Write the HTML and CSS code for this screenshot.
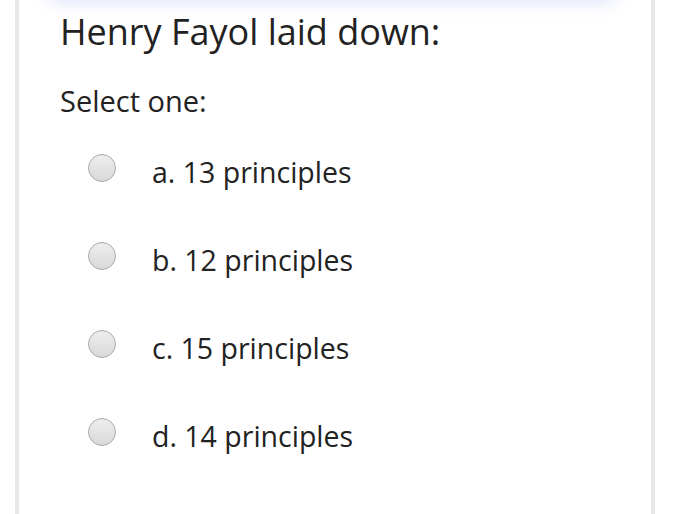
FILE: index.html
```html
<!DOCTYPE html>
<html>
<head>
<meta charset="utf-8">
<link rel="stylesheet" href="styles.css">
</head>
<body>
<div class="page">
  <div class="topcard"></div>
  <div class="content">
    <h1 class="question">Henry Fayol laid down:</h1>
    <p class="prompt">Select one:</p>
    <div class="answers">
      <label class="option"><span class="radio"></span><span class="label">a. 13 principles</span></label>
      <label class="option"><span class="radio"></span><span class="label">b. 12 principles</span></label>
      <label class="option"><span class="radio"></span><span class="label">c. 15 principles</span></label>
      <label class="option"><span class="radio"></span><span class="label">d. 14 principles</span></label>
    </div>
  </div>
</div>
</body>
</html>
```
FILE: styles.css
```css
html, body {
  margin: 0;
  padding: 0;
  background: #ffffff;
}
body {
  font-family: "Open Sans", "Liberation Sans", sans-serif;
  color: #222222;
}
.page {
  margin-left: 15px;
  width: 632px;
  height: 514px;
  border-left: 4px solid #e7e7e7;
  border-right: 4px solid #e7e7e7;
  overflow: hidden;
}
.topcard {
  height: 20px;
  margin: -22px 34px 0 30px;
  background: #ffffff;
  border-radius: 12px;
  box-shadow: 0 4px 18px rgba(90, 110, 230, 0.2);
}
.content {
  padding-left: 41px;
}
.question {
  margin: 0;
  padding-top: 12px;
  font-size: 36px;
  line-height: 44px;
  font-weight: 400;
  color: #222222;
}
.prompt {
  margin: 0;
  padding-top: 32px;
  font-size: 29px;
  line-height: 30px;
  color: #222222;
}
.answers {
  display: flex;
  flex-direction: column;
  gap: 60px;
  padding-top: 38px;
  padding-left: 28px;
}
.option {
  display: flex;
  align-items: center;
  height: 28px;
  gap: 36px;
}
.radio {
  width: 26px;
  height: 26px;
  border-radius: 50%;
  border: 1px solid #a9a9a9;
  background: linear-gradient(#eeeeee, #d9d9d9);
  flex: none;
}
.label {
  font-size: 28.5px;
  font-weight: 500;
  color: #222222;
  line-height: 30px;
  margin-top: 8px;
}
```
